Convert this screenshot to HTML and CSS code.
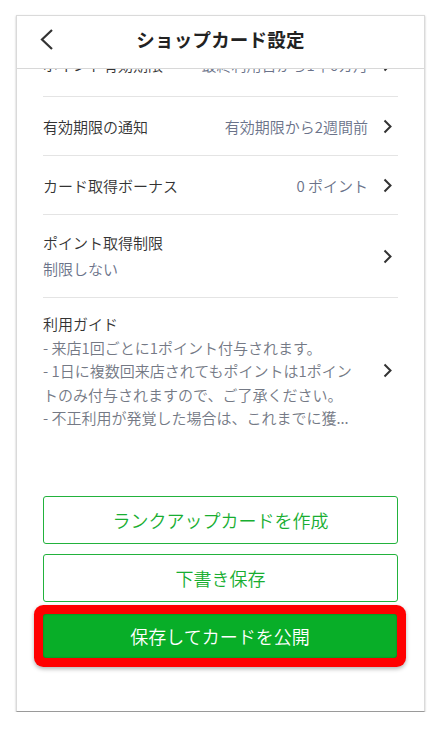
FILE: index.html
```html
<!DOCTYPE html>
<html lang="ja">
<head>
<meta charset="utf-8">
<title>ショップカード設定</title>
<link rel="stylesheet" href="styles.css">
</head>
<body>
<div class="phone">
  <header class="header">
    <svg class="back" width="14" height="22" viewBox="0 0 14 22"><polyline points="12,2 2,11.5 12,21" fill="none" stroke="#333" stroke-width="2.2"/></svg>
    <h1 class="title">ショップカード設定</h1>
    <span></span>
  </header>
  <div class="content">
    <div class="list">
      <div class="row row-first">
        <span class="label">ポイント有効期限</span>
        <span class="value">最終利用日から1年6カ月</span>
        <svg class="chev" width="9" height="15" viewBox="0 0 9 15"><polyline points="1.5,1.5 7.5,7.5 1.5,13.5" fill="none" stroke="#333" stroke-width="2"/></svg>
      </div>
      <div class="row">
        <span class="label">有効期限の通知</span>
        <span class="value">有効期限から2週間前</span>
        <svg class="chev" width="9" height="15" viewBox="0 0 9 15"><polyline points="1.5,1.5 7.5,7.5 1.5,13.5" fill="none" stroke="#333" stroke-width="2"/></svg>
      </div>
      <div class="row">
        <span class="label">カード取得ボーナス</span>
        <span class="value">0 ポイント</span>
        <svg class="chev" width="9" height="15" viewBox="0 0 9 15"><polyline points="1.5,1.5 7.5,7.5 1.5,13.5" fill="none" stroke="#333" stroke-width="2"/></svg>
      </div>
      <div class="row row-tall">
        <div class="stack">
          <span class="label">ポイント取得制限</span>
          <span class="sub">制限しない</span>
        </div>
        <svg class="chev" width="9" height="15" viewBox="0 0 9 15"><polyline points="1.5,1.5 7.5,7.5 1.5,13.5" fill="none" stroke="#333" stroke-width="2"/></svg>
      </div>
      <div class="row row-guide">
        <div class="guide">
          <div class="label">利用ガイド</div>
          <div class="gline">- 来店1回ごとに1ポイント付与されます。</div>
          <div class="gline">- 1日に複数回来店されてもポイントは1ポイン</div>
          <div class="gline">トのみ付与されますので、ご了承ください。</div>
          <div class="gline">- 不正利用が発覚した場合は、これまでに獲...</div>
        </div>
        <svg class="chev" width="9" height="15" viewBox="0 0 9 15"><polyline points="1.5,1.5 7.5,7.5 1.5,13.5" fill="none" stroke="#333" stroke-width="2"/></svg>
      </div>
    </div>
    <div class="actions">
      <button class="btn btn-outline">ランクアップカードを作成</button>
      <button class="btn btn-outline">下書き保存</button>
      <button class="btn btn-primary">保存してカードを公開</button>
    </div>
  </div>
</div>
</body>
</html>
```

FILE: styles.css
```css
* { box-sizing: border-box; }
html, body { margin: 0; padding: 0; background: #fff; }
body {
  font-family: "Noto Sans CJK JP", "Noto Sans", sans-serif;
  color: #333;
  font-weight: 350;
}
.phone {
  margin: 15px 0 0 16px;
  width: 409px;
  height: 697px;
  border: 1px solid #dadada;
  border-bottom-color: #9a9a9a;
  box-shadow: 0 1px 2px rgba(0,0,0,0.25);
  background: #fff;
  display: flex;
  flex-direction: column;
  overflow: hidden;
}
.header {
  flex: none;
  height: 53px;
  border-bottom: 1px solid #d8d8d8;
  display: grid;
  grid-template-columns: 60px 1fr 60px;
  align-items: center;
  padding: 0 0 6px 0;
  position: relative;
  z-index: 1;
  background: #fff;
}
.back { margin-left: 23px; }
.title {
  margin: 0;
  text-align: center;
  font-size: 18.5px;
  font-weight: 700;
  color: #222;
  letter-spacing: 0.2px;
}
.content {
  flex: 1;
  display: flex;
  flex-direction: column;
  overflow: hidden;
}
.list {
  margin-top: -31px;
  padding: 0 26px;
}
.row {
  display: flex;
  align-items: center;
  height: 59px;
  border-bottom: 1px solid #e4e4e4;
  font-size: 15px;
}
.row-first { padding-bottom: 5px; }
.row-tall { height: 83px; }
.row-guide {
  height: auto;
  border-bottom: none;
  padding-top: 14px;
  align-items: center;
}
.label { color: #333; flex: none; }
.value {
  margin-left: auto;
  color: #6a7289;
}
.chev { flex: none; margin-left: 15px; margin-right: 6px; }
.stack {
  display: flex;
  flex-direction: column;
  line-height: 26px;
  flex: 1;
}
.sub { color: #6a7289; }
.guide {
  flex: 1;
  line-height: 23.5px;
}
.gline {
  color: #747985;
  white-space: nowrap;
}
.actions {
  margin-top: auto;
  padding: 0 26px 53px;
  display: flex;
  flex-direction: column;
}
.btn {
  font-family: inherit;
  font-size: 18px;
  font-weight: 350;
  height: 48px;
  border-radius: 3px;
  width: 100%;
  cursor: pointer;
}
.btn-outline {
  background: #fff;
  border: 1px solid #22b23c;
  color: #18ae31;
  margin-bottom: 10px;
}
.btn-outline + .btn-outline { margin-bottom: 12px; }
.btn-primary {
  height: 44px;
  width: 354px;
  border: none;
  background: #08ae28;
  color: #fff;
  box-shadow: inset 0 0 2px rgba(0,0,0,0.35), 0 0 0 9px #ff0000, 0 2px 4px 9px rgba(0,0,0,0.3);
}
```
